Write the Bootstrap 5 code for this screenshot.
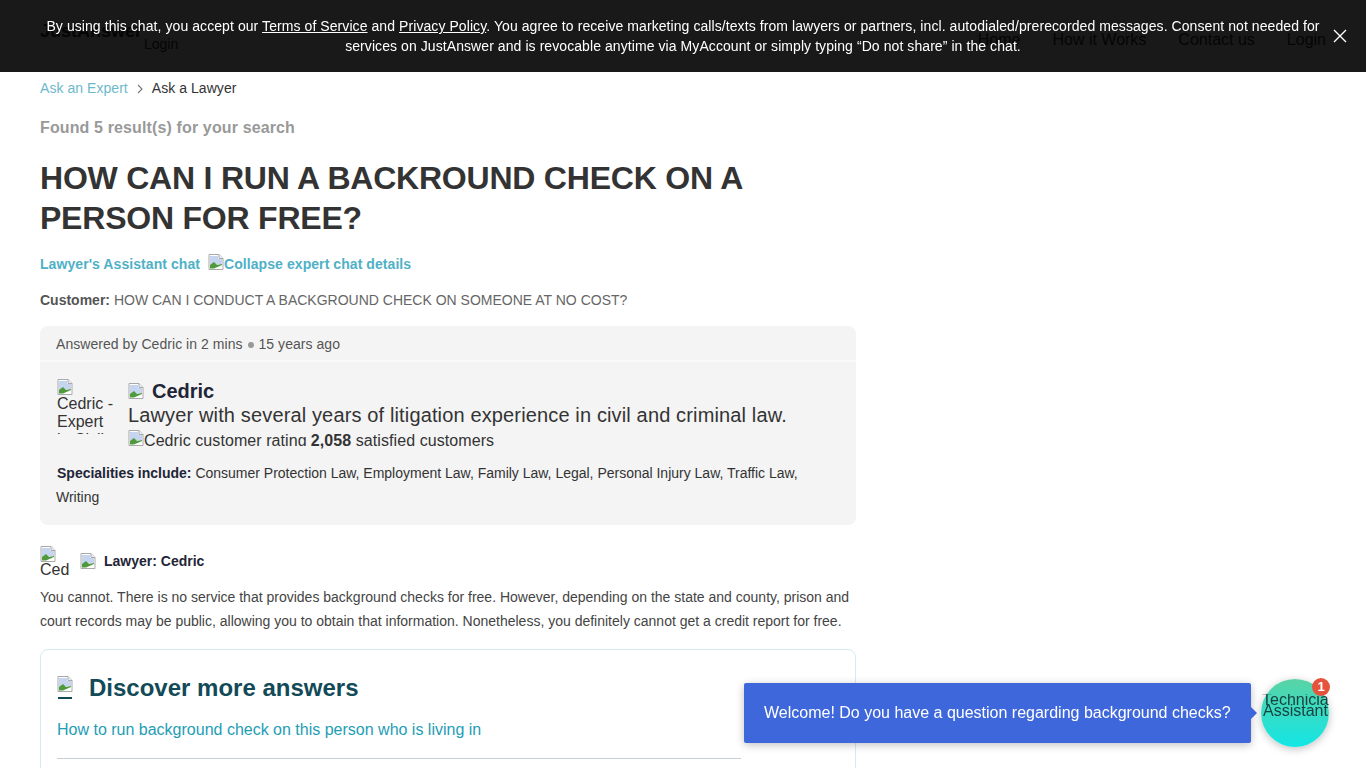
<!DOCTYPE html>
<html lang="en">
<head>
<meta charset="utf-8">
<title>Ask a Lawyer</title>
<link href="https://cdn.jsdelivr.net/npm/bootstrap@5.3.0/dist/css/bootstrap.min.css" rel="stylesheet">
<style>
html,body{height:768px;overflow:hidden}
body{font-family:"Liberation Sans",Arial,sans-serif;font-size:14px;color:#333;background:#fff}
.consent-bar{position:fixed;top:0;left:0;right:0;height:72px;background:rgba(0,0,0,.9);color:#fff;font-size:14px;line-height:19.5px;padding:17px 40px 0;text-align:center;z-index:10;letter-spacing:.076px}
.consent-bar p{margin:0 auto;width:1286px;max-width:1286px}
.consent-bar a{color:#fff;text-decoration:underline}
.consent-close{position:absolute;right:19px;top:29px;width:14px;height:14px;display:block}
.site-head{height:72px;padding:0 40px;color:#333;font-size:16px}
.site-logo{font-size:18px;font-weight:700;padding-top:18px;width:104px}
.site-login-left{padding-top:34px;font-size:14px;width:60px}
.site-nav{padding-top:28px;gap:32px}
.main-col{width:816px;margin-left:40px}
.crumbs{font-size:14px;line-height:16px;height:16px;margin-top:8px;color:#333;letter-spacing:.05px}
.crumbs a{color:#6db9cc;text-decoration:none}
.crumb-sep{margin:0 9px 0 9px;display:inline-block;width:6px;height:10px}
.found{font-size:16px;font-weight:700;color:#999;line-height:20px;margin-top:22px;letter-spacing:.13px}
.page-title{font-size:32px;line-height:40px;font-weight:700;color:#333;margin:20px 0 0;letter-spacing:-.22px}
.chat-links{margin-top:16px;line-height:20px;font-weight:700;font-size:14px;color:#4fb0c6;letter-spacing:.07px}
.chat-links a{color:#4fb0c6;text-decoration:none}
.broken{display:inline-block;flex:none;vertical-align:top}
.cust-line{margin:16px 0 0;line-height:20px;color:#666;font-size:14px}
.cust-line b{color:#555}
.answer-box{margin-top:16px;background:#f4f4f4;border-radius:8px;height:199px;overflow:hidden}
.answer-top{height:36px;border-bottom:2px solid #f9f9f9;padding:8px 16px 0;line-height:20px;color:#555;letter-spacing:.05px}
.dot-sep{display:inline-block;width:6px;height:6px;border-radius:50%;background:#999;margin:0 1px 1px 1px}
.expert-row{padding:17px 16px 0 17px;gap:15px}
.alt-box{width:56px;height:55px;overflow:hidden;font-size:16px;line-height:18px;color:#333;flex:none}
.alt-box .broken{display:block}
.expert-name{font-size:20px;font-weight:700;color:#1f2537;line-height:24px;gap:8px}
.expert-desc{font-size:20px;line-height:24px;color:#333;height:24px;white-space:nowrap;letter-spacing:.14px}
.expert-rate{font-size:16px;line-height:22px;color:#333;height:18px;margin-top:3px;overflow:visible;letter-spacing:.08px}
.rate-clip{display:inline-block;height:16px;overflow:hidden;vertical-align:top;line-height:21px}
.spec-line{margin:0;padding:13px 16px 0;line-height:24px;font-size:14px;color:#333;letter-spacing:-.005px}
.spec-line b{color:#1f2537;margin-left:1px}
.lawyer-row{margin-top:21px;height:30px;gap:10px}
.lawyer-alt{width:30px;height:30px;overflow:hidden;font-size:16px;line-height:16px;flex:none}
.lawyer-alt .broken{display:block}
.lawyer-name{font-weight:700;color:#1f2537;font-size:14px;line-height:16px;margin-left:-2px}
.answer-text{margin:9px 0 0;line-height:24px;color:#444;font-size:14px}
.more-box{margin-top:16px;border:1px solid #d4ecf1;border-radius:8px;height:200px;padding:0 16px;overflow:hidden}
.more-head{padding-top:26px;gap:16px;height:54px}
.more-title{font-size:24px;font-weight:700;color:#134a58;line-height:24px}
.more-link{display:block;margin-top:15px;color:#1e9db5;text-decoration:none;font-size:16px;line-height:22px}
.more-rule{width:684px;margin:17px 0 0;border:0;border-top:1px solid #c9ced2;opacity:1}
.chat-bubble{position:fixed;left:744px;top:683px;width:507px;height:60px;background:#3f67dc;color:#fff;font-size:16px;line-height:60px;padding-left:20px;border-radius:2px;box-shadow:0 2px 8px rgba(0,0,0,.25);white-space:nowrap}
.chat-bubble::after{content:"";position:absolute;right:-6px;top:24px;border-left:6px solid #3f67dc;border-top:6px solid transparent;border-bottom:6px solid transparent}
.chat-avatar{position:fixed;left:1261px;top:679px;width:68px;height:68px;border-radius:50%;background:linear-gradient(180deg,#5ad3a5 0%,#12e6e6 100%);box-shadow:0 2px 8px rgba(0,0,0,.25);color:#17423f;font-size:16px;line-height:11px;text-align:center}
.avatar-text{position:absolute;left:0;top:15px;width:68px;overflow:hidden;white-space:nowrap}
.avatar-text span{display:block;margin-left:1px}
.avatar-badge{position:absolute;right:-1px;top:-1px;width:18px;height:18px;border-radius:50%;background:#e5533d;color:#fff;font-size:13px;font-weight:700;line-height:18px;text-align:center}
</style>
</head>
<body>
<svg width="0" height="0" class="position-absolute">
<defs>
<symbol id="brk" viewBox="0 0 16 16">
<path d="M1 .5h10l4 4v11H1z" fill="#fff" stroke="#a9a9a9"/>
<path d="M11 .5v4h4" fill="#e8eef8" stroke="#a9a9a9"/>
<path d="M2 2h8v3h4v5L2 12z" fill="#c5d5f0"/>
<path d="M2 14.5V11l4-3 3 3 5-1v1L6 14.5z" fill="#4f9a3c"/>
</symbol>
</defs>
</svg>

<header class="site-head d-flex justify-content-between">
  <div class="d-flex"><div class="site-logo">JustAnswer</div><div class="site-login-left">Login</div></div>
  <nav class="site-nav d-flex"><span>Home</span><span>How it Works</span><span>Contact us</span><span>Login</span></nav>
</header>

<div class="consent-bar">
  <p>By using this chat, you accept our <a href="#">Terms of Service</a> and <a href="#">Privacy Policy</a>. You agree to receive marketing calls/texts from lawyers or partners, incl. autodialed/prerecorded messages. Consent not needed for services on JustAnswer and is revocable anytime via MyAccount or simply typing “Do not share” in the chat.</p>
  <svg class="consent-close" viewBox="0 0 14 14"><path d="M1 1l12 12M13 1L1 13" stroke="#fff" stroke-width="1.4"/></svg>
</div>

<main class="main-col">
  <div class="crumbs"><a href="#">Ask an Expert</a><svg class="crumb-sep" viewBox="0 0 6 10"><path d="M1 1l4 4-4 4" fill="none" stroke="#777" stroke-width="1.1"/></svg>Ask a Lawyer</div>
  <div class="found">Found 5 result(s) for your search</div>
  <h1 class="page-title">HOW CAN I RUN A BACKROUND CHECK ON A PERSON FOR FREE?</h1>
  <div class="chat-links d-flex">
    <a href="#">Lawyer's Assistant chat</a>
    <a href="#" class="d-flex ms-2"><svg class="broken" width="16" height="16"><use href="#brk"/></svg>Collapse expert chat details</a>
  </div>
  <p class="cust-line"><b>Customer:</b> HOW CAN I CONDUCT A BACKGROUND CHECK ON SOMEONE AT NO COST?</p>

  <section class="answer-box">
    <div class="answer-top">Answered by Cedric in 2 mins <span class="dot-sep"></span> 15 years ago</div>
    <div class="expert-row d-flex">
      <div class="alt-box"><svg class="broken" width="16" height="16"><use href="#brk"/></svg>Cedric - Expert in Civil</div>
      <div>
        <div class="expert-name d-flex align-items-center"><svg class="broken" width="16" height="16"><use href="#brk"/></svg>Cedric</div>
        <div class="expert-desc">Lawyer with several years of litigation experience in civil and criminal law.</div>
        <div class="expert-rate d-flex"><span class="rate-clip"><svg class="broken" width="16" height="16"><use href="#brk"/></svg>Cedric customer rating</span><span class="ms-1"><b>2,058</b> satisfied customers</span></div>
      </div>
    </div>
    <p class="spec-line"><b>Specialities include:</b> Consumer Protection Law, Employment Law, Family Law, Legal, Personal Injury Law, Traffic Law, Writing</p>
  </section>

  <div class="lawyer-row d-flex align-items-center">
    <div class="lawyer-alt"><svg class="broken" width="16" height="16"><use href="#brk"/></svg>Cedric</div>
    <svg class="broken" width="16" height="16"><use href="#brk"/></svg>
    <div class="lawyer-name">Lawyer: Cedric</div>
  </div>
  <p class="answer-text">You cannot. There is no service that provides background checks for free. However, depending on the state and county, prison and court records may be public, allowing you to obtain that information. Nonetheless, you definitely cannot get a credit report for free.</p>

  <section class="more-box">
    <div class="more-head d-flex">
      <svg class="broken" width="16" height="24" viewBox="0 0 16 24"><use href="#brk" width="16" height="16"/><rect x="1" y="21" width="14" height="2" fill="#134a58"/></svg>
      <div class="more-title">Discover more answers</div>
    </div>
    <a class="more-link" href="#">How to run background check on this person who is living in</a>
    <hr class="more-rule">
  </section>
</main>

<div class="chat-bubble">Welcome! Do you have a question regarding background checks?</div>
<div class="chat-avatar">
  <div class="avatar-text"><span>Technician</span><span>Assistant</span></div>
  <div class="avatar-badge">1</div>
</div>
</body>
</html>
